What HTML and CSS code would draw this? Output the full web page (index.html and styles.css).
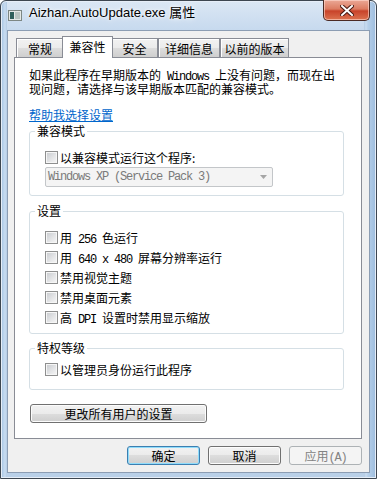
FILE: index.html
```html
<!DOCTYPE html>
<html lang="zh-CN">
<head>
  <meta charset="UTF-8" />
  <meta name="viewport" content="width=device-width, initial-scale=1" />
  <title>Aizhan.AutoUpdate.exe 属性</title>
  <link rel="stylesheet" href="styles.css">
</head>
<body>
  <div class="window">
    <div class="titlebar">
      <svg class="app-icon" width="14" height="11" viewBox="0 0 14 11">
        <rect x="0.5" y="0.5" width="13" height="10" fill="#e4e8e6" stroke="#7d8784" />
        <rect x="2" y="2" width="4" height="7" fill="#2f5f5a" />
        <rect x="7" y="2" width="5" height="7" fill="#b9c4c0" />
      </svg>
      <span class="title">Aizhan.AutoUpdate.exe 属性</span>
      <button class="close" title="关闭">
        <svg width="14" height="11" viewBox="0 0 14 11">
          <path d="M2 1 L12 10 M12 1 L2 10" stroke="#4a1a12" stroke-width="4" stroke-linecap="square" />
          <path d="M2 1 L12 10 M12 1 L2 10" stroke="#fff" stroke-width="2" stroke-linecap="square" />
        </svg>
      </button>
    </div>

    <div class="client">
      <ul class="tabs">
        <li class="tab tab-general">常规</li>
        <li class="tab tab-compat active">兼容性</li>
        <li class="tab tab-security">安全</li>
        <li class="tab tab-details">详细信息</li>
        <li class="tab tab-prev">以前的版本</li>
      </ul>

      <div class="page">
        <p class="intro">如果此程序在早期版本的<span class="mono"> Windows </span>上没有问题，而现在出<br>现问题，请选择与该早期版本匹配的兼容模式。</p>
        <a class="help" href="#">帮助我选择设置</a>

        <fieldset class="group group-compat">
          <legend>兼容模式</legend>
          <label class="check-row"><input type="checkbox" /><span>以兼容模式运行这个程序:</span></label>
          <div class="combo">
            <span class="mono">Windows XP (Service Pack 3)</span>
            <svg class="combo-arrow" width="7" height="4" viewBox="0 0 7 4"><path d="M0 0 H7 L3.5 4 Z" fill="#a5a5a5" /></svg>
          </div>
        </fieldset>

        <fieldset class="group group-settings">
          <legend>设置</legend>
          <label class="check-row"><input type="checkbox" /><span>用<span class="mono"> 256 </span>色运行</span></label>
          <label class="check-row"><input type="checkbox" /><span>用<span class="mono"> 640 x 480 </span>屏幕分辨率运行</span></label>
          <label class="check-row"><input type="checkbox" /><span>禁用视觉主题</span></label>
          <label class="check-row"><input type="checkbox" /><span>禁用桌面元素</span></label>
          <label class="check-row"><input type="checkbox" /><span>高<span class="mono"> DPI </span>设置时禁用显示缩放</span></label>
        </fieldset>

        <fieldset class="group group-priv">
          <legend>特权等级</legend>
          <label class="check-row"><input type="checkbox" /><span>以管理员身份运行此程序</span></label>
        </fieldset>

        <button class="btn btn-wide">更改所有用户的设置</button>
      </div>

      <div class="actions">
        <button class="btn btn-default">确定</button>
        <button class="btn">取消</button>
        <button class="btn" disabled>应用<span class="mono">(A)</span></button>
      </div>
    </div>
  </div>
</body>
</html>
```

FILE: styles.css
```css
* {
  box-sizing: border-box;
}
html, body {
  margin: 0;
  height: 480px;
  background: #ffffff;
}
body {
  font-family: "Noto Sans CJK SC", "Noto Sans", sans-serif;
  font-size: 12px;
  color: #000;
}
.window {
  width: 377px;
  height: 479px;
  border: 1px solid #3d4650;
  border-radius: 6px 6px 0 0;
  padding: 0 6px 5px;
  background:
    linear-gradient(to right, #9dbcdd 0, #b6d0ea 2px, #c9dcf0 4px, #b3cbe4 6px, transparent 6px, transparent 363px, #b3cbe4 363px, #c9dcf0 365px, #b6d0ea 367px, #9dbcdd 375px),
    linear-gradient(to bottom, #dbe7f4 0, #c6d9ee 30px, #b9d0e8 100%);
  box-shadow: inset 0 0 0 1px #e6eef8;
}
.titlebar {
  height: 29px;
  display: flex;
  align-items: flex-start;
  padding-left: 1px;
}
.app-icon {
  margin-top: 9px;
  flex: none;
}
.title {
  margin: 2px 0 0 7px;
  font-family: "Liberation Sans", "Noto Sans CJK SC", sans-serif;
  font-size: 13px;
  line-height: 20px;
  text-shadow: 0 0 6px #fff, 0 0 3px #fff;
}
.close {
  margin: -1px 0 0 auto;
  width: 47px;
  height: 21px;
  padding: 0;
  border: 1px solid #4b2a24;
  border-top: none;
  border-radius: 0 0 5px 5px;
  background: linear-gradient(to bottom, #eba896 0, #dc7c62 45%, #c8432a 55%, #dc7350 100%);
  box-shadow: inset 0 0 0 1px rgba(255, 220, 210, 0.6);
  display: flex;
  align-items: center;
  justify-content: center;
}
.client {
  height: 443px;
  background: #f0f0f0;
  border: 1px solid #8c9db3;
  padding: 5px 7px 0 6px;
  display: flex;
  flex-direction: column;
}
.tabs {
  list-style: none;
  margin: 0;
  padding: 0 0 0 2px;
  height: 21px;
  display: flex;
  align-items: flex-end;
  position: relative;
  z-index: 1;
}
.tab {
  height: 19px;
  line-height: 17px;
  padding-top: 1px;
  text-align: center;
  border: 1px solid #898c95;
  border-bottom: none;
  background: linear-gradient(to bottom, #f2f2f2 0, #ebebeb 50%, #dddddd 50%, #cfcfcf 100%);
  box-shadow: inset 1px 1px 0 #fff;
}
.tab-general { width: 48px; }
.tab-security { width: 47px; }
.tab-details { width: 62px; }
.tab-prev { width: 69px; }
.tab.active {
  width: 51px;
  height: 22px;
  margin: 0 -2px -1px;
  line-height: 18px;
  padding-top: 1px;
  background: #fff;
  box-shadow: none;
  position: relative;
  z-index: 2;
}
.page {
  height: 382px;
  background: #fff;
  border: 1px solid #898c95;
  padding: 10px 17px 0 14px;
}
.intro {
  margin: 0;
  line-height: 13px;
  white-space: nowrap;
}
.mono {
  font-family: "Liberation Mono", monospace;
  font-size: 12px;
  line-height: 10px;
  letter-spacing: -1.2px;
  white-space: pre;
}
.help {
  display: block;
  width: max-content;
  margin-top: 13px;
  line-height: 13px;
  color: #0066cc;
}
.group {
  margin: 2px 0 0;
  min-width: 0;
  border: 1px solid #d5dfe5;
  border-radius: 3px;
  padding: 8px 15px 8px;
}
.group legend {
  margin-left: -10px;
  padding: 0 2px;
  line-height: 16px;
}
.group-settings {
  margin-top: 7px;
  padding-bottom: 6px;
}
.group-priv {
  margin-top: 6px;
  padding-top: 3px;
  padding-bottom: 10px;
}
.check-row {
  display: flex;
  align-items: center;
  height: 20px;
}
.check-row input {
  appearance: none;
  -webkit-appearance: none;
  flex: none;
  width: 13px;
  height: 13px;
  margin: 0 2px 0 0;
  border: 1px solid #8e8f8f;
  background: linear-gradient(135deg, #c6c9cd 0, #e3e4e6 55%, #f7f7f7 100%);
  box-shadow: inset 0 0 0 1px #f6f6f6;
}
.combo {
  width: 228px;
  height: 20px;
  border: 1px solid #c3c6c9;
  border-radius: 2px;
  background: #f4f4f4;
  color: #7a7a7a;
  padding: 0 4px 0 2px;
  display: flex;
  align-items: center;
  justify-content: space-between;
}
.combo-arrow {
  margin-right: 1px;
}
.btn {
  height: 19px;
  padding: 0;
  font-family: inherit;
  font-size: 12px;
  color: #000;
  border: 1px solid #707070;
  border-radius: 3px;
  background: linear-gradient(to bottom, #f2f2f2 0, #ebebeb 50%, #dddddd 50%, #cfcfcf 100%);
  box-shadow: inset 0 0 0 1px #fcfcfc;
}
.btn-wide {
  display: block;
  width: 177px;
  margin: 14px 0 0 1px;
}
.btn-default {
  border-color: #3c7fb1;
  box-shadow: inset 0 0 0 1px #8fdcfb;
}
.btn:disabled {
  color: #838383;
  border-color: #adb2b5;
  background: #f4f4f4;
  box-shadow: none;
}
.actions {
  display: flex;
  justify-content: flex-end;
  gap: 8px;
  margin-top: 7px;
}
.actions .btn {
  width: 73px;
}
```
